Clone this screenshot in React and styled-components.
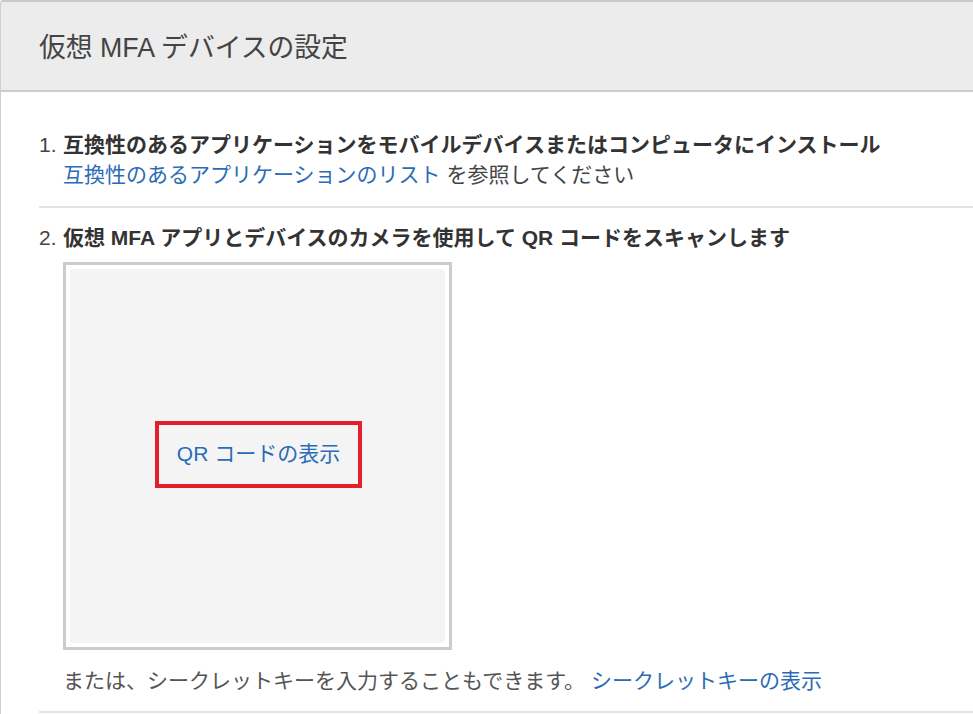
import React from "react";
import styled, { createGlobalStyle } from "styled-components";

const Global = createGlobalStyle`
  html, body { margin: 0; padding: 0; background: #fff; }
  body {
    font-family: "Liberation Sans", "Noto Sans CJK JP", Arial, sans-serif;
    color: #444;
    overflow: hidden;
  }
`;

const Panel = styled.div`
  width: 973px;
  height: 714px;
  box-sizing: border-box;
  border-top: 2px solid #c9c9c9;
  border-left: 1px solid #cfcfcf;
  border-top-left-radius: 3px;
  overflow: hidden;
`;

const Header = styled.div`
  height: 88px;
  background: #ececec;
  border-bottom: 2px solid #cccccc;
  display: flex;
  align-items: center;
  padding-left: 38px;
`;

const Title = styled.h2`
  margin: 0 0 2px;
  font-size: 26.8px;
  font-weight: normal;
  color: #444;
`;

const Body = styled.div`
  padding: 38px 0 0 38px;
`;

const Step = styled.div`
  display: flex;
  font-size: 21px;
  line-height: 30px;
  padding-bottom: ${(p) => p.$pb}px;
  border-bottom: 2px solid #e2e2e2;
  margin-bottom: 15px;
`;

const Num = styled.span`
  width: 24px;
  flex: none;
  color: #444;
`;

const Content = styled.div`
  flex: 1;
`;

const Strong = styled.div`
  font-weight: bold;
  color: #333;
`;

const Link = styled.a`
  color: #2a6cb5;
  text-decoration: none;
  cursor: pointer;
`;

const QrFrame = styled.div`
  margin-top: 9px;
  width: 389px;
  height: 388px;
  box-sizing: border-box;
  border: 3px solid #cccccc;
  padding: 4px;
  background: #fff;
`;

const QrInner = styled.div`
  width: 100%;
  height: 100%;
  background: #f4f4f4;
  border-radius: 3px;
  display: flex;
  align-items: center;
  justify-content: center;
`;

const Highlight = styled.div`
  border: 4px solid #e2202b;
  padding: 0 18px;
  height: 59px;
  margin-top: -4px;
  margin-left: 2px;
  display: flex;
  align-items: center;
  font-size: 21px;
`;

const Note = styled.div`
  margin-top: 16px;
  color: #555;
`;

export default function App() {
  return (
    <>
      <Global />
      <Panel>
        <Header>
          <Title>仮想 MFA デバイスの設定</Title>
        </Header>
        <Body>
          <Step $pb={16}>
            <Num>1.</Num>
            <Content>
              <Strong>互換性のあるアプリケーションをモバイルデバイスまたはコンピュータにインストール</Strong>
              <div>
                <Link>互換性のあるアプリケーションのリスト</Link> を参照してください
              </div>
            </Content>
          </Step>
          <Step $pb={15}>
            <Num>2.</Num>
            <Content>
              <Strong>仮想 MFA アプリとデバイスのカメラを使用して QR コードをスキャンします</Strong>
              <QrFrame>
                <QrInner>
                  <Highlight>
                    <Link>QR コードの表示</Link>
                  </Highlight>
                </QrInner>
              </QrFrame>
              <Note>
                または、シークレットキーを入力することもできます。 <Link>シークレットキーの表示</Link>
              </Note>
            </Content>
          </Step>
        </Body>
      </Panel>
    </>
  );
}
